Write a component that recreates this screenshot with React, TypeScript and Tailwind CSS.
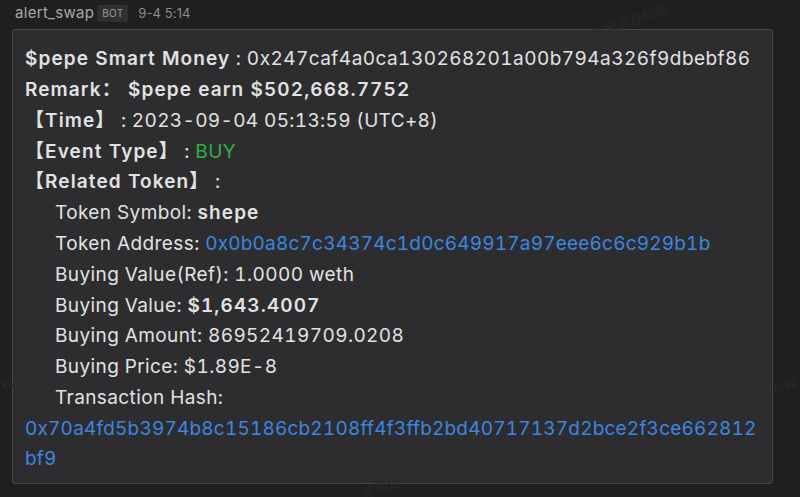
import React from "react";

const font = { fontFamily: 'Inter, "Noto Sans CJK SC", sans-serif' };

function Watermark({ className, text }: { className: string; text: string }) {
  return (
    <div
      className={`pointer-events-none absolute select-none text-[13px] text-[#292929] -rotate-[20deg] whitespace-nowrap ${className}`}
    >
      {text}
    </div>
  );
}

export default function App() {
  const line = "h-[30.8px] flex items-center whitespace-nowrap";
  const bold = "font-semibold tracking-[1.1px]";
  return (
    <div
      className="relative w-[800px] h-[497px] overflow-hidden bg-[#1f1f1f] text-[#e2e2e2]"
      style={font}
    >
      <div className="flex items-center h-[26px] pl-[15px] pt-[1px]">
        <span className="text-[15px] tracking-[0.3px] text-[#a9a9a9]">alert_swap</span>
        <span className="ml-[3px] px-[5px] h-[17px] flex items-center rounded-[2px] bg-[#303030] text-[10px] text-[#9a9a9a] tracking-wide">
          BOT
        </span>
        <span className="ml-[10px] text-[13px] tracking-[0.1px] text-[#8c8c8c]">9-4 5:14</span>
      </div>

      <div className="mt-[3px] ml-[12px] w-[761px] h-[455px] rounded-[3px] border border-[#464648] bg-[#2d2d2f] pl-[12px] pr-[8px] pt-[14px] text-[19px] tracking-[0.4px] tabular-nums">
        <div className={line}>
          <b className={bold}>$pepe Smart Money</b>
          <span className="tracking-[0.45px]">&nbsp;: 0x247caf4a0ca130268201a00b794a326f9dbebf86</span>
        </div>
        <div className={line}>
          <b className={bold}>Remark：&nbsp;$pepe earn $502,668.7752</b>
        </div>
        <div className={line}>
          <b className={bold}>【Time】</b>
          <span className="tracking-[0.35px]">&nbsp;: 2023-09-04 05:13:59 (UTC+8)</span>
        </div>
        <div className={line}>
          <b className={bold}>【Event Type】</b>
          <span>&nbsp;:&nbsp;</span>
          <span className="text-[#2fb344]">BUY</span>
        </div>
        <div className={line}>
          <b className={bold}>【Related Token】</b>
          <span>&nbsp;:</span>
        </div>
        <div className="pl-[30px]">
          <div className={line}>
            Token Symbol:&nbsp;<b className={bold}>shepe</b>
          </div>
          <div className={line}>
            Token Address:&nbsp;
            <span className="text-[#3d86e0] tracking-[0.2px]">0x0b0a8c7c34374c1d0c649917a97eee6c6c929b1b</span>
          </div>
          <div className={line}>Buying Value(Ref): 1.0000 weth</div>
          <div className={line}>
            Buying Value:&nbsp;<b className={bold}>$1,643.4007</b>
          </div>
          <div className={line}>Buying Amount: 86952419709.0208</div>
          <div className={line}>Buying Price: $1.89E-8</div>
          <div className={line}>Transaction Hash:</div>
        </div>
        <div className="text-[#3d86e0] tracking-[0.2px] leading-[30.8px] break-all">
          0x70a4fd5b3974b8c15186cb2108ff4f3ffb2bd40717137d2bce2f3ce662812bf9
        </div>
      </div>

      <Watermark className="left-[592px] top-[12px]" text="陈思远@科锐" />
      <Watermark className="left-[772px] top-[378px]" text="科锐" />
      <Watermark className="left-[2px] top-[376px]" text="科" />
      <Watermark className="left-[362px] top-[481px] text-[10px] leading-[12px]" text="陈思远" />
    </div>
  );
}
